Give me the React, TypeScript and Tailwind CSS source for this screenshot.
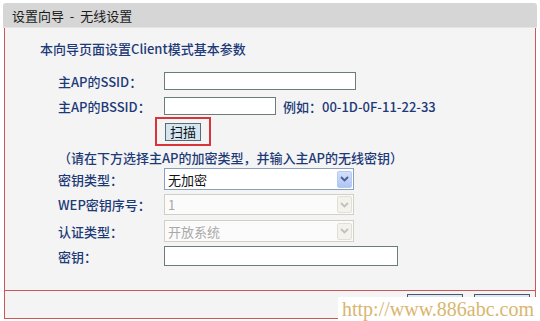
import React from "react";

const blue = "text-[#1d3a78]";

function Chevron({ disabled }: { disabled?: boolean }) {
  return (
    <svg width="9" height="6" viewBox="0 0 9 6">
      <path
        d="M1 1 L4.5 4.5 L8 1"
        fill="none"
        stroke={disabled ? "#c4c2b6" : "#4a5f8c"}
        strokeWidth="1.8"
      />
    </svg>
  );
}

function FakeSelect({ value, disabled }: { value: string; disabled?: boolean }) {
  return (
    <div
      className={
        disabled
          ? "flex h-full w-[190px] items-center border border-[#d2d0c6] bg-[#fbfbfb] pl-[3px] pr-[1px]"
          : "flex h-full w-[190px] items-center border border-[#8aa0bd] bg-white pl-[3px] pr-[1px]"
      }
    >
      <span className={disabled ? "flex-1 text-[#a9a9a9]" : "flex-1 text-[#111]"}>{value}</span>
      <div
        className={
          disabled
            ? "flex h-[17px] w-[15px] items-center justify-center rounded-[2px] border border-[#e2e0d6] bg-[#f3f2ec]"
            : "flex h-[17px] w-[15px] items-center justify-center rounded-[2px] border border-[#b7c9ee] bg-gradient-to-b from-[#d3e0fb] to-[#adc4f3]"
        }
      >
        <Chevron disabled={disabled} />
      </div>
    </div>
  );
}

function Row({ label, mt, h, children }: { label: string; mt: string; h: string; children: React.ReactNode }) {
  return (
    <div className={`flex shrink-0 items-center pl-[53px] ${mt} ${h}`}>
      <div className={`w-[106px] font-medium ${blue}`}>{label}</div>
      {children}
    </div>
  );
}

export default function App() {
  return (
    <div className="relative h-[321px] w-[540px] overflow-hidden bg-white pt-[3px] font-['Noto_Sans_CJK_SC',sans-serif] text-[13px] leading-none">
      <div className="mx-[3px] flex h-[25px] items-center whitespace-pre rounded-t-[3px] border-b border-[#e4e4e4] bg-[#d6d6d6] pl-[9px] text-[13px] text-[#1a1a1a]">
        设置向导  -  无线设置
      </div>

      <div className="ml-[4px] w-[532px] border-x border-[#c9585a] bg-[#f4f4f4]">
        <div className="flex h-[263px] flex-col border-b border-[#c9585a] pt-[12px]">
          <div className={`flex h-[16px] shrink-0 items-center pl-[35px] font-medium ${blue}`}>
            本向导页面设置Client模式基本参数
          </div>

          <Row label="主AP的SSID：" mt="mt-[16px]" h="h-[18px]">
            <div className="h-full w-[192px] border border-[#6b7d78] bg-white" />
          </Row>

          <Row label="主AP的BSSID：" mt="mt-[7px]" h="h-[18px]">
            <div className="h-full w-[112px] border border-[#6b7d78] bg-white" />
            <span className={`ml-[7px] font-medium ${blue}`}>例如：00-1D-0F-11-22-33</span>
          </Row>

          <div className="ml-[53px] mt-[2px] flex h-[29px] shrink-0 pl-[97px]">
            <div className="flex h-[29px] w-[56px] items-center justify-center border-2 border-[#d8343a]">
              <button className="flex h-[18px] w-[36px] items-center justify-center border border-[#5a6a70] bg-[#d3e6f2] text-[13px] text-[#111]">
                扫描
              </button>
            </div>
          </div>

          <div className={`mt-[3px] flex h-[16px] shrink-0 items-center pl-[53px] font-medium ${blue}`}>
            （请在下方选择主AP的加密类型，并输入主AP的无线密钥）
          </div>

          <Row label="密钥类型：" mt="mt-[3px]" h="h-[22px]">
            <FakeSelect value="无加密" />
          </Row>
          <Row label="WEP密钥序号：" mt="mt-[4px]" h="h-[21px]">
            <FakeSelect value="1" disabled />
          </Row>
          <Row label="认证类型：" mt="mt-[5px]" h="h-[22px]">
            <FakeSelect value="开放系统" disabled />
          </Row>
          <Row label="密钥：" mt="mt-[4px]" h="h-[20px]">
            <div className="h-full w-[234px] border border-[#6b7d78] bg-white" />
          </Row>
        </div>

        <div className="flex h-[28px] items-start justify-end gap-[11px] border-b border-[#c9585a] pr-[5px] pt-[3px]">
          <button className="flex h-[20px] w-[56px] items-start justify-center border border-[#4d5a66] bg-[#dde9f5] pt-[2px] text-[12px] text-[#111]">上一步</button>
          <button className="flex h-[20px] w-[56px] items-start justify-center border border-[#4d5a66] bg-[#dde9f5] pt-[2px] text-[12px] text-[#111]">下一步</button>
        </div>
      </div>

      <div className="absolute left-[338px] top-[297px] flex h-[24px] w-[202px] items-center bg-white pl-[4px] font-['Liberation_Serif',serif] text-[20px] text-[#d9b670]">
        http://www.886abc.com
      </div>
    </div>
  );
}
